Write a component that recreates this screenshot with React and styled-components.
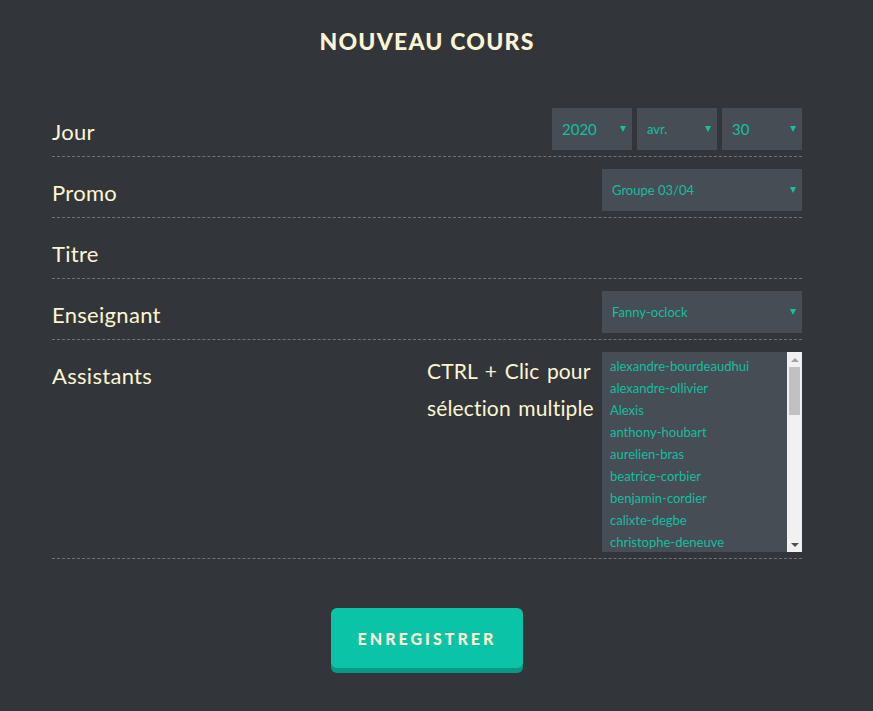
import React from "react";
import styled, { createGlobalStyle } from "styled-components";

const Global = createGlobalStyle`
  html, body { margin: 0; padding: 0; background: #32363a; }
  body { font-family: Lato, "Open Sans", sans-serif; color: #fdf5d2; }
  * { box-sizing: border-box; }
`;

const Page = styled.div`
  min-height: 711px;
  padding: 26px 0 40px 52px;
`;

const Form = styled.form`
  width: 750px;
  display: flex;
  flex-direction: column;
`;

const Title = styled.h1`
  margin: 0 0 40px;
  text-align: center;
  font-size: 23px;
  line-height: 30px;
  font-weight: 900;
  letter-spacing: 1.2px;
  color: #fdf5d2;
`;

const Row = styled.div`
  display: flex;
  align-items: flex-start;
  padding: 12px 0 6px;
  border-bottom: 1px dashed #6f7378;
  min-height: 61px;
`;

const Label = styled.label`
  flex: 1;
  margin: 3px 0 -3px;
  font-size: 22px;
  line-height: 42px;
  letter-spacing: 0.3px;
  color: #fdf5d2;
`;

const Controls = styled.div`
  display: flex;
  gap: 5px;
  align-items: flex-start;
`;

const SelectWrap = styled.div`
  position: relative;
  width: ${(p) => p.$w}px;
  height: 42px;
  &::after {
    content: "";
    position: absolute;
    right: 6px;
    top: 18px;
    border-left: 3.5px solid transparent;
    border-right: 3.5px solid transparent;
    border-top: 6px solid #12c2a3;
    pointer-events: none;
  }
`;

const Select = styled.select`
  appearance: none;
  -webkit-appearance: none;
  width: 100%;
  height: 100%;
  border: none;
  outline: none;
  border-radius: 0;
  background: #474d55;
  color: #12bfa0;
  font-family: Lato, "Open Sans", sans-serif;
  font-size: ${(p) => p.$fs || 13}px;
  padding: 0 10px;
`;

const Hint = styled.div`
  font-size: 21px;
  line-height: 37px;
  word-spacing: 2px;
  letter-spacing: 0.15px;
  color: #fdf5d2;
  margin-right: 5px;
  width: 170px;
`;

const ListBox = styled.div`
  display: flex;
  width: 200px;
  height: 200px;
  background: #474d55;
`;

const Multi = styled.select`
  flex: 1;
  min-width: 0;
  height: 200px;
  border: none;
  outline: none;
  border-radius: 0;
  background: #474d55;
  color: #12bfa0;
  font-family: Lato, "Open Sans", sans-serif;
  font-size: 13px;
  padding: 3px 0 0;
  overflow: hidden;
  scrollbar-width: none;
  option {
    padding: 3px 8px;
    height: 22px;
    line-height: 16px;
  }
`;

const ScrollTrack = styled.div`
  width: 15px;
  height: 200px;
  background: #f1f1f1;
  display: flex;
  flex-direction: column;
  align-items: center;
`;

const ScrollArrow = styled.div`
  width: 15px;
  height: 15px;
  display: flex;
  align-items: center;
  justify-content: center;
  &::before {
    content: "";
    border-left: 4px solid transparent;
    border-right: 4px solid transparent;
    ${(p) =>
      p.$down
        ? "border-top: 4px solid #505050;"
        : "border-bottom: 4px solid #a3a3a3;"}
  }
`;

const ScrollThumb = styled.div`
  width: 11px;
  height: 48px;
  background: #c1c1c1;
`;

const ScrollSpacer = styled.div`
  flex: 1;
`;

const ButtonBar = styled.div`
  display: flex;
  justify-content: center;
  margin-top: 49px;
`;

const Button = styled.button`
  width: 192px;
  height: 60px;
  border: none;
  border-radius: 6px;
  background: #0bc4a7;
  box-shadow: 0 5px 0 #0a9783;
  color: #fdf5d2;
  font-family: Lato, "Open Sans", sans-serif;
  font-weight: 900;
  font-size: 16px;
  letter-spacing: 3px;
  padding: 0;
  cursor: pointer;
`;

const assistants = [
  "alexandre-bourdeaudhui",
  "alexandre-ollivier",
  "Alexis",
  "anthony-houbart",
  "aurelien-bras",
  "beatrice-corbier",
  "benjamin-cordier",
  "calixte-degbe",
  "christophe-deneuve",
  "claire-dubois",
  "damien-roux",
  "david-lefebvre",
  "elodie-martin",
  "emilie-garnier",
  "florian-petit",
  "guillaume-moreau",
  "helene-fournier",
  "jean-baptiste-leroy",
  "julie-girard",
  "julien-bonnet",
  "kevin-dupont",
  "laura-lambert",
  "lucas-fontaine",
  "marie-rousseau",
  "mathieu-vincent",
  "nicolas-muller",
  "pauline-faure",
  "pierre-andre",
  "romain-mercier",
  "sarah-blanc",
  "thomas-guerin",
  "vincent-boyer",
];

export default function App() {
  return (
    <>
      <Global />
      <Page>
        <Form onSubmit={(e) => e.preventDefault()}>
          <Title>NOUVEAU COURS</Title>
          <Row>
            <Label>Jour</Label>
            <Controls>
              <SelectWrap $w={80}>
                <Select $fs={15} defaultValue="2020">
                  <option>2020</option>
                </Select>
              </SelectWrap>
              <SelectWrap $w={80}>
                <Select $fs={13} defaultValue="avr.">
                  <option>avr.</option>
                </Select>
              </SelectWrap>
              <SelectWrap $w={80}>
                <Select $fs={15} defaultValue="30">
                  <option>30</option>
                </Select>
              </SelectWrap>
            </Controls>
          </Row>
          <Row>
            <Label>Promo</Label>
            <SelectWrap $w={200}>
              <Select>
                <option>Groupe 03/04</option>
              </Select>
            </SelectWrap>
          </Row>
          <Row>
            <Label>Titre</Label>
          </Row>
          <Row>
            <Label>Enseignant</Label>
            <SelectWrap $w={200}>
              <Select>
                <option>Fanny-oclock</option>
              </Select>
            </SelectWrap>
          </Row>
          <Row>
            <Label>Assistants</Label>
            <Hint>CTRL + Clic pour sélection multiple</Hint>
            <ListBox>
              <Multi multiple defaultValue={[]}>
                {assistants.map((a) => (
                  <option key={a}>{a}</option>
                ))}
              </Multi>
              <ScrollTrack aria-hidden="true">
                <ScrollArrow />
                <ScrollThumb />
                <ScrollSpacer />
                <ScrollArrow $down />
              </ScrollTrack>
            </ListBox>
          </Row>
          <ButtonBar>
            <Button type="submit">ENREGISTRER</Button>
          </ButtonBar>
        </Form>
      </Page>
    </>
  );
}
